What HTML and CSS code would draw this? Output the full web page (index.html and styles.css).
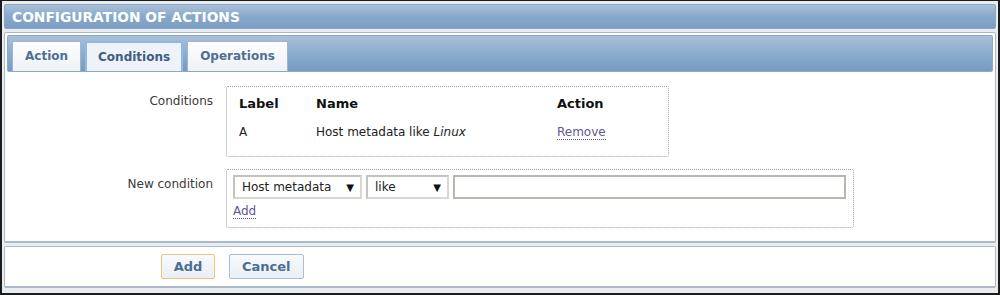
FILE: index.html
```html
<!DOCTYPE html>
<html lang="en">

<head>
    <meta charset="UTF-8">
    <title>Configuration of actions</title>
    <link rel="stylesheet" href="styles.css">
</head>

<body>
    <div class="frame">
        <div class="header">CONFIGURATION OF ACTIONS</div>

        <div class="panel">
            <div class="tabs">
                <div class="tab">Action</div>
                <div class="tab active">Conditions</div>
                <div class="tab">Operations</div>
            </div>

            <div class="form">
                <div class="row">
                    <div class="label">Conditions</div>
                    <div class="box conditions">
                        <table>
                            <tr>
                                <th class="col-label">Label</th>
                                <th class="col-name">Name</th>
                                <th>Action</th>
                            </tr>
                            <tr>
                                <td>A</td>
                                <td>Host metadata like <i>Linux</i></td>
                                <td><span class="link">Remove</span></td>
                            </tr>
                        </table>
                    </div>
                </div>

                <div class="row">
                    <div class="label">New condition</div>
                    <div class="box new-condition">
                        <div class="inputs">
                            <div class="select wide">Host metadata <span class="arrow">&#9660;</span></div>
                            <div class="select narrow">like <span class="arrow">&#9660;</span></div>
                            <div class="text-input"></div>
                        </div>
                        <span class="link">Add</span>
                    </div>
                </div>
            </div>
        </div>

        <div class="panel footer">
            <button class="btn primary">Add</button>
            <button class="btn">Cancel</button>
        </div>
    </div>
</body>

</html>
```

FILE: styles.css
```css
* {
    box-sizing: border-box;
}

body {
    margin: 0;
    font-family: 'DejaVu Sans', Verdana, sans-serif;
    font-size: 12px;
    color: #222;
}

.frame {
    width: 1000px;
    height: 295px;
    border: 2px solid #1c1c1c;
    border-top-width: 1px;
    background-color: #e8edf1;
    padding: 3px 2px 0 2px;
}

.header {
    height: 25px;
    padding: 0 7px;
    line-height: 24px;
    color: #fff;
    font-weight: bold;
    font-size: 13.8px;
    background: linear-gradient(#a9c0d9, #86a7ca 55%, #7a9dc3);
    border: 1px solid #8aa6c4;
    border-radius: 2px;
}

.panel {
    margin-top: 3px;
    background-color: #fff;
    border: 1px solid #a9b9c8;
    border-bottom-width: 2px;
    border-radius: 2px;
}

.tabs {
    display: flex;
    gap: 4px;
    margin: 2px 2px 0 2px;
    height: 37px;
    padding: 6px 0 0 4px;
    align-items: flex-end;
    background: linear-gradient(#a9c0d9, #8badd0 50%, #779bc2);
    border: 1px solid #8ea9c6;
    border-radius: 2px;
}

.tab {
    height: 30px;
    padding: 0 12px;
    line-height: 29px;
    font-weight: bold;
    font-size: 12px;
    color: #4f6f94;
    background: linear-gradient(#fdfdfe, #eef2f6);
    border: 1px solid #9fb6ce;
    border-bottom: none;
}

.tab.active {
    background: #edf3f9;
    border: 2px solid #92b8e0;
    border-bottom: none;
    color: #405d80;
    padding: 0 11px;
}

.form {
    padding: 14px 0 13px 0;
}

.row {
    display: flex;
}

.row + .row {
    margin-top: 12px;
}

.label {
    width: 208px;
    padding: 8px 0 0 0;
    text-align: right;
    color: #3a3a3a;
}

.box {
    margin-left: 13px;
    border: 1px dotted #9aa3ad;
    border-radius: 2px;
}

.conditions {
    width: 443px;
    height: 71px;
    padding: 6px 12px;
}

table {
    border-collapse: collapse;
}

th {
    text-align: left;
    font-size: 13px;
    font-weight: bold;
    color: #111;
    padding: 3px 0 8px 0;
}

td {
    padding: 6px 0;
    color: #222;
}

.col-label {
    width: 77px;
}

.col-name {
    width: 241px;
}

.link {
    color: #5e5892;
    border-bottom: 1px dotted #5e5892;
}

.new-condition {
    width: 628px;
    height: 59px;
    padding: 5px 6px;
}

.inputs {
    display: flex;
    gap: 4px;
    margin-bottom: 5px;
}

.select,
.text-input {
    height: 24px;
    border: 2px solid #c4c4bc;
    border-right-color: #d8d8d2;
    border-bottom-color: #d8d8d2;
    background: #fff;
}

.select {
    display: flex;
    justify-content: space-between;
    align-items: center;
    padding: 0 6px 0 7px;
    color: #222;
}

.arrow {
    font-size: 10px;
    color: #111;
}

.wide {
    width: 129px;
}

.narrow {
    width: 83px;
}

.text-input {
    width: 393px;
    border-color: #b8b8b0;
}

.footer {
    height: 42px;
    display: flex;
    align-items: center;
    gap: 14px;
    padding-left: 156px;
}

.btn {
    height: 25px;
    padding: 0 12px;
    font-family: 'DejaVu Sans', Verdana, sans-serif;
    font-weight: bold;
    font-size: 13px;
    color: #4d6d93;
    background: linear-gradient(#f8fafc, #e9eff5);
    border: 1px solid #a9bdd3;
    border-radius: 2px;
}

.btn.primary {
    width: 54px;
    border-color: #f2c37a;
    padding: 0;
}
```
